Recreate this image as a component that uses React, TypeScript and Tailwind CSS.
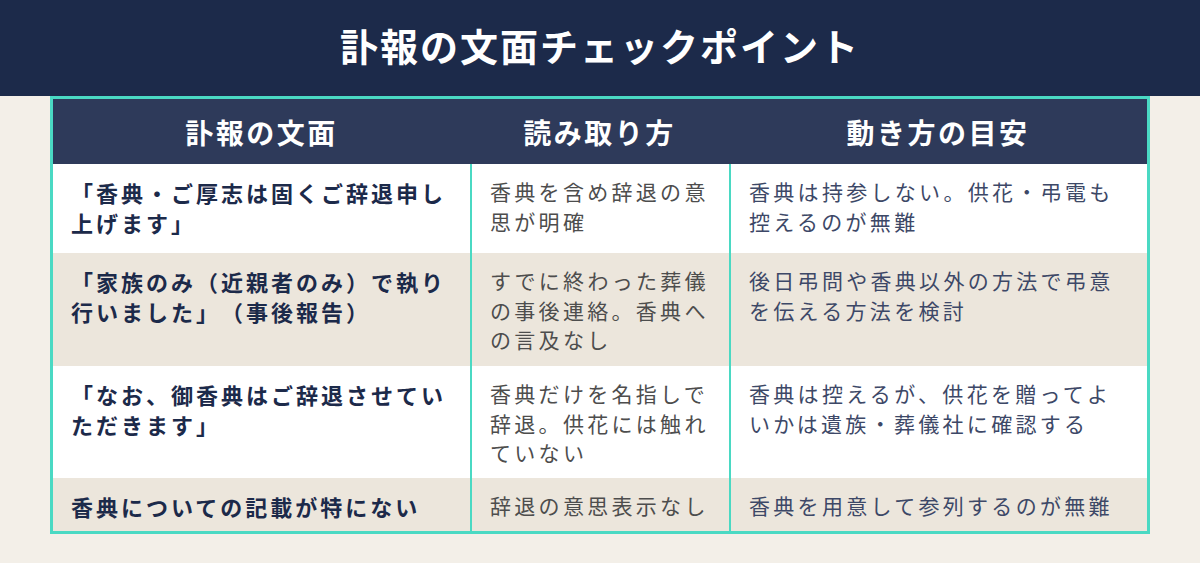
import React from "react";

const rows: { a: string[]; b: string[]; c: string[]; h: string; bg: string }[] = [
  {
    a: ["「香典・ご厚志は固くご辞退申し", "上げます」"],
    b: ["香典を含め辞退の意", "思が明確"],
    c: ["香典は持参しない。供花・弔電も", "控えるのが無難"],
    h: "h-[89px]",
    bg: "bg-white",
  },
  {
    a: ["「家族のみ（近親者のみ）で執り", "行いました」（事後報告）"],
    b: ["すでに終わった葬儀", "の事後連絡。香典へ", "の言及なし"],
    c: ["後日弔問や香典以外の方法で弔意", "を伝える方法を検討"],
    h: "h-[113px]",
    bg: "bg-[#ece6dc]",
  },
  {
    a: ["「なお、御香典はご辞退させてい", "ただきます」"],
    b: ["香典だけを名指しで", "辞退。供花には触れ", "ていない"],
    c: ["香典は控えるが、供花を贈ってよ", "いかは遺族・葬儀社に確認する"],
    h: "h-[112px]",
    bg: "bg-white",
  },
  {
    a: ["香典についての記載が特にない"],
    b: ["辞退の意思表示なし"],
    c: ["香典を用意して参列するのが無難"],
    h: "h-[53px]",
    bg: "bg-[#ece6dc]",
  },
];

const Lines = ({ lines }: { lines: string[] }) => (
  <>
    {lines.map((l, i) => (
      <div key={i} className="whitespace-nowrap">
        {l}
      </div>
    ))}
  </>
);

export default function App() {
  return (
    <div
      className="w-[1200px] h-[563px] bg-[#f3efe8] flex flex-col overflow-hidden [text-spacing-trim:space-all]"
      style={{ fontFamily: '"Noto Sans CJK JP", "Noto Sans", sans-serif' }}
    >
      <div className="h-[96px] bg-[#1c2a4a] flex items-center justify-center pb-[6px] shrink-0">
        <h1 className="text-white text-[38px] font-bold tracking-[2px] leading-none">
          訃報の文面チェックポイント
        </h1>
      </div>
      <div className="mx-[50px] w-[1100px] border-[3px] border-[#4ad9c3] flex flex-col">
        <div className="grid grid-cols-[417px_259px_418px] h-[65px] bg-[#2e3a5a] text-white text-[28px] font-bold tracking-[2.5px]">
          <div className="flex items-center justify-center">訃報の文面</div>
          <div className="flex items-center justify-center">読み取り方</div>
          <div className="flex items-center justify-center">動き方の目安</div>
        </div>
        {rows.map((r, i) => (
          <div key={i} className={`grid grid-cols-[417px_259px_418px] ${r.h} ${r.bg}`}>
            <div className="pl-[18px] pt-[13px] text-[22px] leading-[30px] font-bold tracking-[3px] text-[#1c2a4a]">
              <Lines lines={r.a} />
            </div>
            <div className="border-l-2 border-[#4ad9c3] pl-[18px] pt-[13px] text-[21px] leading-[29.5px] tracking-[3.3px] text-[#4d4d4d]">
              <Lines lines={r.b} />
            </div>
            <div className="border-l-2 border-[#4ad9c3] pl-[18px] pt-[13px] text-[21px] leading-[29.5px] tracking-[3.3px] text-[#3d4867]">
              <Lines lines={r.c} />
            </div>
          </div>
        ))}
      </div>
    </div>
  );
}
